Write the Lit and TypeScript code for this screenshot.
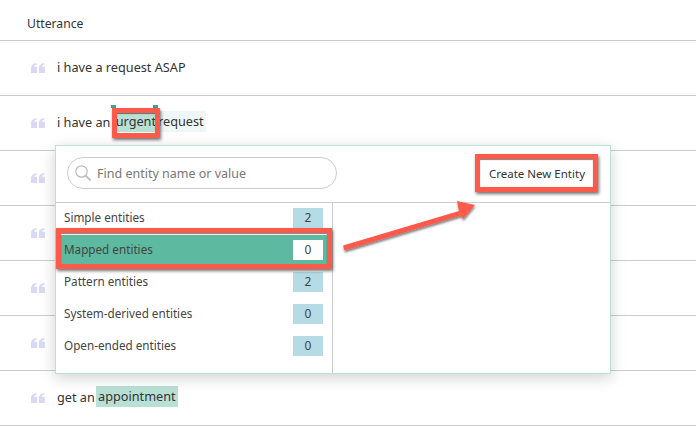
import { LitElement, html, css, svg } from "lit";
import { customElement } from "lit/decorators.js";

const quote = html`<svg class="quote" width="14" height="10" viewBox="0 0 14 10">
  <path fill="#d9d9f5" d="M0 5.2C0 2.4 1.8.6 5.4 0l.5 1.6C4.3 2 3.4 2.7 3.2 3.8h2.9V10H0zM7.8 5.2C7.8 2.4 9.6.6 13.2 0l.5 1.6c-1.6.4-2.5 1.1-2.7 2.2h2.9V10H7.8z"/>
</svg>`;

const entityTypes = [
  { name: "Simple entities", count: 2 },
  { name: "Mapped entities", count: 0, active: true },
  { name: "Pattern entities", count: 2 },
  { name: "System-derived entities", count: 0 },
  { name: "Open-ended entities", count: 0 },
];

@customElement("app-root")
export class AppRoot extends LitElement {
  static styles = css`
    :host {
      display: block;
      position: relative;
      width: 696px;
      height: 426px;
      overflow: hidden;
      background: #fff;
      font-family: "Noto Sans", "Open Sans", sans-serif;
      font-size: 12.7px;
      color: #333;
    }
    .head {
      height: 41px;
      box-sizing: border-box;
      padding: 6px 0 0 27px;
      display: flex;
      align-items: center;
      border-bottom: 1px solid #ccc;
      font-size: 12.2px;
    }
    .row {
      height: 55px;
      box-sizing: border-box;
      padding: 0 0 1px 31px;
      display: flex;
      align-items: center;
      border-bottom: 1px solid #ccc;
    }
    .quote {
      margin-right: 12px;
      flex: none;
    }
    .row span {
      white-space: pre;
      margin-top: -2px;
    }
    .row .ent {
      line-height: 21px;
      padding: 0 2px;
      background: #b9e0d5;
    }
    .row .soft {
      background: #eef7f5;
      padding: 0 2px 0 0;
    }
    .row .tight {
      margin-left: -2px;
    }
    .popup {
      position: absolute;
      left: 55px;
      top: 145px;
      width: 556px;
      height: 229px;
      box-sizing: border-box;
      border: 1px solid #b9e0d5;
      background: #fff;
      box-shadow: 0 4px 14px rgba(0, 0, 0, 0.18);
      display: flex;
      flex-direction: column;
    }
    .top {
      height: 57px;
      flex: none;
      box-sizing: border-box;
      border-bottom: 1px solid #ccc;
      padding: 0 11px 2px;
      display: flex;
      align-items: center;
      justify-content: space-between;
    }
    .search {
      width: 270px;
      height: 32px;
      box-sizing: border-box;
      border: 1px solid #ccc;
      border-radius: 16px;
      padding-left: 6px;
      display: flex;
      align-items: center;
      gap: 5px;
      color: #777;
      font-size: 12.5px;
    }
    .create {
      margin-right: 14px;
      font-size: 11.5px;
      color: #333;
    }
    .cols {
      flex: 1;
      display: flex;
    }
    .list {
      width: 277px;
      box-sizing: border-box;
      border-right: 1px solid #ccc;
    }
    .item {
      height: 32px;
      box-sizing: border-box;
      padding: 0 9px 2px 8px;
      display: flex;
      align-items: center;
      justify-content: space-between;
      font-size: 11.7px;
      color: #444;
    }
    .item span {
      margin-top: -2px;
    }
    .item.active {
      background: #5db9a0;
    }
    .item b {
      width: 30px;
      height: 20px;
      line-height: 20px;
      text-align: center;
      font-weight: 400;
      font-size: 12px;
      background: #b5dce4;
    }
    .item.active b {
      background: #fff;
    }
    .mark {
      position: absolute;
      box-sizing: border-box;
      border: 5px solid #fd5a4c;
      box-shadow: 1px 2px 3px rgba(0, 0, 0, 0.55), inset 0 1px 1px rgba(0, 0, 0, 0.5);
    }
    .m-urgent {
      left: 112px;
      top: 108px;
      width: 48px;
      height: 30px;
    }
    .m-mapped {
      left: 56px;
      top: 228px;
      width: 276px;
      height: 41px;
    }
    .m-create {
      left: 475px;
      top: 154px;
      width: 123px;
      height: 38px;
    }
    .pin {
      position: absolute;
      top: 105px;
      width: 5px;
      height: 3px;
      background: #3fa58c;
    }
    .arrow {
      position: absolute;
      left: 0;
      top: 0;
    }
  `;

  render() {
    return html`
      <div class="head">Utterance</div>
      <div class="row">${quote}<span>i have a request ASAP</span></div>
      <div class="row">
        ${quote}<span>i have an </span><span class="ent">urgent</span><span class="ent soft">request</span>
      </div>
      <div class="row">${quote}</div>
      <div class="row">${quote}</div>
      <div class="row">${quote}</div>
      <div class="row">${quote}</div>
      <div class="row">${quote}<span>get an </span><span class="ent tight">appointment</span></div>

      <div class="popup">
        <div class="top">
          <div class="search">
            <svg width="18" height="18" viewBox="0 0 18 18" fill="none" stroke="#bbb">
              <circle cx="7.5" cy="7.5" r="5.7" stroke-width="1.2" />
              <path d="M11.7 11.7l5 5" stroke-width="1.8" />
            </svg>
            <span>Find entity name or value</span>
          </div>
          <div class="create">Create New Entity</div>
        </div>
        <div class="cols">
          <div class="list">
            ${entityTypes.map(
              (e) => html`<div class="item ${e.active ? "active" : ""}">
                <span>${e.name}</span><b>${e.count}</b>
              </div>`
            )}
          </div>
        </div>
      </div>

      <div class="pin" style="left:111px"></div>
      <div class="pin" style="left:153px"></div>
      <div class="mark m-urgent"></div>
      <div class="mark m-mapped"></div>
      <div class="mark m-create"></div>
      <svg class="arrow" width="696" height="426" fill="none">
        ${svg`<defs><filter id="s" x="-10%" y="-20%" width="120%" height="150%">
          <feDropShadow dx="0.5" dy="2" stdDeviation="1" flood-color="#000" flood-opacity="0.5" />
        </filter></defs>
        <path filter="url(#s)" fill="#fd5a4c" d="M343 245.500L459 211L457 201L475 205L463 219L461 215.500L344.500 250.500z" />`}
      </svg>
    `;
  }
}
